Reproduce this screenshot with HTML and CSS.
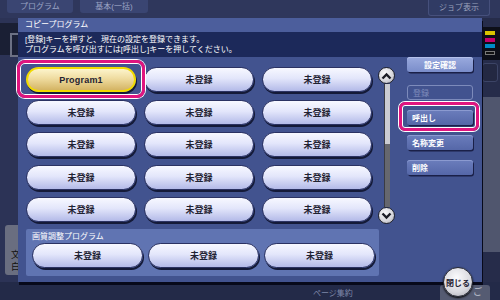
FILE: index.html
```html
<!DOCTYPE html>
<html lang="ja">

<head>
  <meta charset="UTF-8">
  <title>コピープログラム</title>
  <link rel="stylesheet" href="styles.css">
</head>

<body>
  <div class="screen">
    <!-- background: top tabs -->
    <div class="top-bar">
      <div class="tab">プログラム</div>
      <div class="tab tab-wide">基本(一括)</div>
      <div class="job-tab">ジョブ表示</div>
    </div>

    <div class="left-side">
      <div class="thumb-box"><span class="thumb-square"></span></div>
      <div class="side-tab">文<br>白</div>
    </div>

    <div class="center-bg"></div>

    <div class="right-side">
      <div class="toner">
        <span class="toner-bar y"></span>
        <span class="toner-bar m"></span>
        <span class="toner-bar c"></span>
        <span class="toner-bar k"></span>
      </div>
      <div class="side-knob"></div>
      <div class="side-gray"></div>
    </div>

    <div class="bottom-bar">
      <span class="bottom-label">ページ集約</span>
      <div class="bottom-tab">ご</div>
    </div>

    <!-- dialog over the screen -->
    <div class="dialog">
      <div class="dlg-title">コピープログラム</div>
      <div class="dlg-desc">
        [登録]キーを押すと、現在の設定を登録できます。<br>
        プログラムを呼び出すには[呼出し]キーを押してください。
      </div>

      <div class="dlg-body">
        <div class="prog-area">
          <div class="prog-grid">
            <div class="mark"><button class="pbtn pbtn-active">Program1</button></div>
            <button class="pbtn">未登録</button>
            <button class="pbtn">未登録</button>
            <button class="pbtn">未登録</button>
            <button class="pbtn">未登録</button>
            <button class="pbtn">未登録</button>
            <button class="pbtn">未登録</button>
            <button class="pbtn">未登録</button>
            <button class="pbtn">未登録</button>
            <button class="pbtn">未登録</button>
            <button class="pbtn">未登録</button>
            <button class="pbtn">未登録</button>
            <button class="pbtn">未登録</button>
            <button class="pbtn">未登録</button>
            <button class="pbtn">未登録</button>
          </div>

          <div class="quality-panel">
            <div class="quality-label">画質調整プログラム</div>
            <div class="quality-row">
              <button class="pbtn">未登録</button>
              <button class="pbtn">未登録</button>
              <button class="pbtn">未登録</button>
            </div>
          </div>
        </div>

        <div class="scroll">
          <span class="scroll-btn">
            <svg width="11" height="8" viewBox="0 0 11 8"><path d="M1.5 6.5 L5.5 2.5 L9.5 6.5" fill="none" stroke="#1b1d26" stroke-width="2.4" /></svg>
          </span>
          <div class="scroll-track">
            <div class="scroll-thumb"></div>
          </div>
          <span class="scroll-btn">
            <svg width="11" height="8" viewBox="0 0 11 8"><path d="M1.5 1.5 L5.5 5.5 L9.5 1.5" fill="none" stroke="#1b1d26" stroke-width="2.4" /></svg>
          </span>
        </div>

        <div class="side-menu">
          <button class="sbtn sbtn-light">設定確認</button>
          <button class="sbtn sbtn-off">登録</button>
          <div class="mark mark-small"><button class="sbtn">呼出し</button></div>
          <button class="sbtn">名称変更</button>
          <button class="sbtn">削除</button>
        </div>
      </div>
    </div>

    <button class="close-btn">閉じる</button>
  </div>
</body>

</html>
```

FILE: styles.css
```css
body {
  margin: 0;
  width: 500px;
  height: 300px;
  overflow: hidden;
  background-color: #2c3356;
  font-family: "Liberation Sans", "Noto Sans CJK JP", sans-serif;
}

button {
  font-family: inherit;
  padding: 0;
  cursor: pointer;
}

.screen {
  position: relative;
  width: 500px;
  height: 300px;
  display: grid;
  grid-template-columns: 18px 1fr 18px;
  grid-template-rows: 18px 1fr 18px;
}

/* Background screen */
.top-bar {
  grid-column: 1 / 4;
  display: flex;
  align-items: flex-start;
  background: #2f375c;
}

.tab {
  width: 66px;
  height: 13px;
  margin-left: 7px;
  background: #3a4572;
  border-radius: 0 0 3px 3px;
  color: #9aa3c4;
  font-size: 8px;
  line-height: 13px;
  text-align: center;
}

.tab-wide {
  width: 68px;
}

.job-tab {
  margin-left: auto;
  margin-right: 10px;
  width: 62px;
  height: 16px;
  background: #303b64;
  border: 1px solid #46507c;
  border-top: none;
  border-radius: 0 0 3px 3px;
  box-sizing: border-box;
  color: #9ca2bc;
  font-size: 8px;
  line-height: 15px;
  text-align: center;
}

.left-side {
  display: flex;
  flex-direction: column;
}

.thumb-box {
  margin-top: 5px;
  height: 32px;
  background: #1a1f34;
}

.thumb-square {
  display: block;
  margin: 10px 0 0 10px;
  width: 12px;
  height: 20px;
  border: 2px solid #6c7184;
}

.side-tab {
  margin-top: 170px;
  margin-left: 5px;
  height: 50px;
  background: #6a6e80;
  border-radius: 3px 0 0 3px;
  color: #111;
  font-size: 9px;
  line-height: 12px;
  padding: 24px 0 0 6px;
  box-sizing: border-box;
}

.center-bg {
  background: #2c3356;
}

.right-side {
  display: flex;
  flex-direction: column;
  background: #262c4a;
}

.toner {
  margin-top: 9px;
  height: 33px;
  background: #0d0f18;
  display: flex;
  flex-direction: column;
  gap: 2.5px;
  padding: 4px 0 0 3px;
  box-sizing: border-box;
}

.toner-bar {
  width: 10px;
  height: 4px;
}

.toner-bar.y { background: #d8c400; }
.toner-bar.m { background: #c4006a; }
.toner-bar.c { background: #008cc8; }
.toner-bar.k { background: #111; border: 1px solid #777; box-sizing: border-box; }

.side-knob {
  margin-top: 3px;
  width: 14px;
  height: 17px;
  background: #232842;
  border: 1px solid #3c4466;
  border-radius: 3px;
}

.side-gray {
  margin-top: 15px;
  height: 155px;
  background: #50566e;
}

.bottom-bar {
  grid-column: 1 / 4;
  display: flex;
  align-items: flex-end;
  background: #232a48;
}

.bottom-label {
  margin-left: 313px;
  margin-bottom: 2px;
  color: #7f87a8;
  font-size: 8px;
}

.bottom-tab {
  margin-left: auto;
  margin-right: 10px;
  width: 50px;
  height: 15px;
  background: #555b72;
  border-radius: 3px 3px 0 0;
  color: #bfc3d0;
  font-size: 9px;
  text-align: right;
  padding-right: 8px;
  box-sizing: border-box;
}

/* Dialog */
.dialog {
  position: absolute;
  left: 18px;
  top: 18px;
  width: 464px;
  height: 264px;
  background: #42538f;
  box-shadow: 1px 3px 0 #07091a;
  display: flex;
  flex-direction: column;
}

.dlg-title {
  height: 14px;
  padding-left: 7px;
  background: #4c5e9c;
  color: #fff;
  font-size: 8px;
  line-height: 14px;
}

.dlg-desc {
  height: 25px;
  padding: 3px 7px 0;
  box-sizing: border-box;
  background: #1c295a;
  color: #fff;
  font-size: 8px;
  line-height: 10px;
}

.dlg-body {
  display: flex;
  align-items: flex-start;
  padding: 10px 0 0 8px;
}

.prog-area {
  width: 346px;
  flex-shrink: 0;
}

.prog-grid {
  display: grid;
  grid-template-columns: repeat(3, 110px);
  grid-auto-rows: 25px;
  column-gap: 8px;
  row-gap: 7.5px;
}

.pbtn {
  width: 100%;
  height: 25px;
  border: 1px solid #2b3262;
  border-radius: 12.5px;
  background: linear-gradient(#f7f8ff, #e3e6fb 45%, #b3bae8);
  box-shadow: 1px 2px 0 #141a38;
  color: #1f2232;
  font-size: 9px;
  font-weight: bold;
}

.pbtn-active {
  border: 2px solid #f2da00;
  background: linear-gradient(#fdf4cc, #efdca0 45%, #d4b464);
  letter-spacing: 0.2px;
}

.mark {
  position: relative;
}

/* pink highlight ring */
.mark::before {
  content: '';
  position: absolute;
  inset: -7px -9px -6px -9px;
  border: 3px solid #e0157f;
  border-radius: 8px;
  box-shadow: inset 0 0 0 1px #fff, 0 0 0 1px #fff;
}

.mark-small::before {
  inset: -5px -6px -6px -8px;
  border-radius: 6px;
}

.quality-panel {
  margin-top: 7px;
  width: 353px;
  height: 47px;
  padding: 2px 4px 0 6px;
  box-sizing: border-box;
  background: #6074b2;
  border-radius: 2px;
}

.quality-label {
  color: #fff;
  font-size: 8px;
  line-height: 12px;
}

.quality-row {
  display: flex;
  gap: 5px;
}

.quality-row .pbtn {
  width: 111px;
}

/* scroll bar */
.scroll {
  margin-left: 6px;
  width: 17px;
  height: 157px;
  display: flex;
  flex-direction: column;
  align-items: center;
}

.scroll-btn {
  width: 17px;
  height: 17px;
  flex-shrink: 0;
  box-sizing: border-box;
  border: 1px solid #20222c;
  border-radius: 50%;
  background: radial-gradient(circle at 40% 35%, #fafafc, #d4d4da 60%, #9e9ea8);
  display: flex;
  align-items: center;
  justify-content: center;
}

.scroll-track {
  flex: 1;
  width: 5px;
  background: #66676e;
  border-left: 1px solid #3a3b44;
}

.scroll-thumb {
  height: 60px;
  background: #cbccd2;
}

/* right-hand menu */
.side-menu {
  margin-left: 12px;
  margin-top: -10px;
  width: 66px;
  display: flex;
  flex-direction: column;
}

.sbtn {
  height: 15px;
  border: none;
  border-radius: 3px;
  background: linear-gradient(#6b7dbc, #5567a8);
  box-shadow: 1px 1.5px 0 #1a2048, inset 0 1px 0 #8b9ad0;
  color: #fff;
  font-size: 8px;
  font-weight: bold;
  text-align: left;
  padding-left: 5px;
  margin-top: 10px;
}

.sbtn-light {
  margin-top: 0;
  background: linear-gradient(#9aaade, #7a8dca);
  box-shadow: 1px 1.5px 0 #1a2048, inset 0 1px 0 #b4c0ea;
  text-align: center;
  padding-left: 0;
}

.sbtn-off {
  margin-top: 13px;
  margin-bottom: 7px;
  background: transparent;
  border: 1px solid #7d8bbb;
  box-shadow: none;
  color: #7f8bbb;
  font-weight: normal;
}

.mark-small .sbtn {
  width: 100%;
  margin-top: 0;
}

.side-menu .mark-small + .sbtn {
  margin-top: 10px;
}

/* close button */
.close-btn {
  position: absolute;
  left: 443px;
  top: 267px;
  width: 30px;
  height: 30px;
  border: 1px solid #2a2c36;
  border-radius: 50%;
  background: radial-gradient(circle at 45% 35%, #fbfbfd, #d8d8de 60%, #a4a4ae);
  box-shadow: 0 1px 2px #000;
  color: #1f2232;
  font-size: 8px;
  font-weight: bold;
}
```
